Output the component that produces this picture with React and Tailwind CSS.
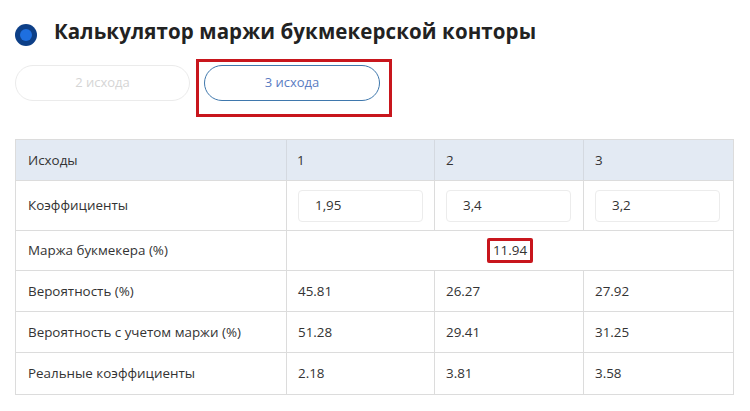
import React from "react";

const rows = [
  ["Вероятность (%)", "45.81", "26.27", "27.92"],
  ["Вероятность с учетом маржи (%)", "51.28", "29.41", "31.25"],
  ["Реальные коэффициенты", "2.18", "3.81", "3.58"],
];

export default function App() {
  return (
    <div className="w-[750px] h-[411px] bg-white overflow-hidden text-[#333]" style={{ fontFamily: "'Open Sans', 'Noto Sans', sans-serif" }}>
      <div className="flex items-center pl-[15px] pt-[13px] h-[37px] box-content">
        <div className="w-[22px] h-[22px] rounded-full bg-[#0d3f87] flex items-center justify-center mt-[6px]">
          <div className="w-[12px] h-[12px] rounded-full bg-[#1e6fe0]" />
        </div>
        <h1 className="ml-[17px] text-[20.5px] font-bold text-[#222] leading-none tracking-[0.1px]">Калькулятор маржи букмекерской конторы</h1>
      </div>
      <div className="flex items-start pl-[15px] mt-[9px]">
        <div className="mt-[6px] w-[175px] h-[36px] rounded-full border border-[#ebebeb] flex items-center justify-center text-[13px] text-[#d5d5d5]">2 исхода</div>
        <div className="ml-[6px] border-[3px] border-[#c8161d] pl-[5px] pr-[9px] pt-[3px] pb-[13px]">
          <div className="w-[176px] h-[36px] rounded-full border border-[#3f78ad] flex items-center justify-center text-[13px] text-[#5a7cc2]">3 исхода</div>
        </div>
      </div>
      <div className="ml-[15px] mt-[22px] w-[719px] border border-[#dcdcdc] text-[13.4px]">
        <div className="grid grid-cols-[270px_148px_149px_1fr] bg-[#e3eaf3] h-[41px] border-b border-[#dcdcdc]">
          <div className="flex items-center pl-[12px]">Исходы</div>
          <div className="flex items-center pl-[10px] border-l border-[#d4d9e0]">1</div>
          <div className="flex items-center pl-[11px] border-l border-[#d4d9e0]">2</div>
          <div className="flex items-center pl-[11px] border-l border-[#d4d9e0]">3</div>
        </div>
        <div className="grid grid-cols-[270px_148px_149px_1fr] h-[50px] border-b border-[#dcdcdc]">
          <div className="flex items-center pl-[12px]">Коэффициенты</div>
          {["1,95", "3,4", "3,2"].map((v) => (
            <div key={v} className="flex items-center pl-[11px] border-l border-[#dcdcdc]">
              <div className="w-[125px] h-[32px] rounded-[4px] border border-[#ececec] flex items-center pl-[16px]">{v}</div>
            </div>
          ))}
        </div>
        <div className="grid grid-cols-[270px_1fr] h-[40px] border-b border-[#dcdcdc]">
          <div className="flex items-center pl-[12px]">Маржа букмекера (%)</div>
          <div className="flex items-center justify-center border-l border-[#dcdcdc]">
            <div className="border-[3px] border-[#c8161d] rounded-[2px] px-[3px] h-[25px] flex items-center">11.94</div>
          </div>
        </div>
        {rows.map((r, i) => (
          <div key={i} className={"grid grid-cols-[270px_148px_149px_1fr] h-[41px] " + (i < 2 ? "border-b border-[#dcdcdc]" : "")}>
            <div className="flex items-center pl-[12px]">{r[0]}</div>
            <div className="flex items-center pl-[11px] border-l border-[#dcdcdc]">{r[1]}</div>
            <div className="flex items-center pl-[11px] border-l border-[#dcdcdc]">{r[2]}</div>
            <div className="flex items-center pl-[11px] border-l border-[#dcdcdc]">{r[3]}</div>
          </div>
        ))}
      </div>
    </div>
  );
}
